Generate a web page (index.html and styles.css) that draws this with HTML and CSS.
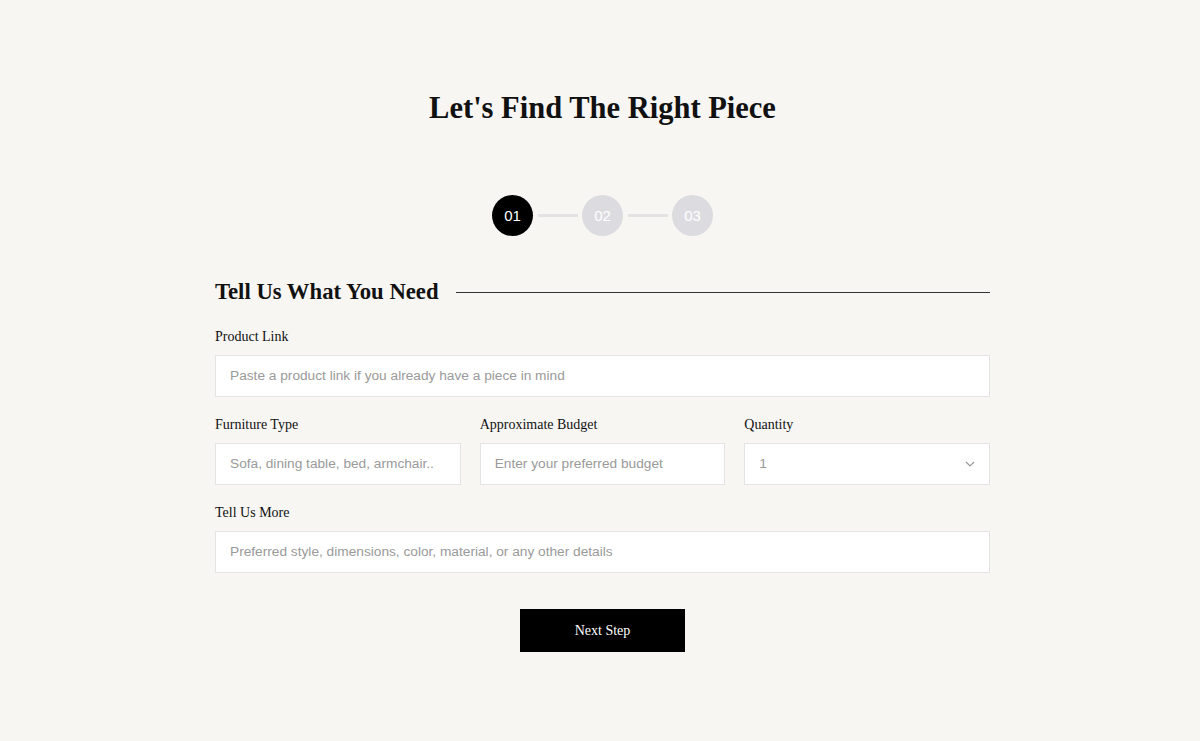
FILE: index.html
```html
<!DOCTYPE html>
<html lang="en">
<head>
  <meta charset="UTF-8" />
  <meta name="viewport" content="width=device-width, initial-scale=1.0"/>
  <title>Find The Right Piece</title>
  <link rel="stylesheet" href="styles.css">
</head>
<body>
  <main class="page">
    <h1 class="title">Let's Find The Right Piece</h1>

    <!-- Steps -->
    <div class="steps">
      <div class="step active">01</div>
      <div class="step-line"></div>
      <div class="step">02</div>
      <div class="step-line"></div>
      <div class="step">03</div>
    </div>

    <form class="form">
      <div class="section-head">
        <h2>Tell Us What You Need</h2>
        <div class="rule"></div>
      </div>

      <div class="field">
        <label>Product Link</label>
        <input type="text" placeholder="Paste a product link if you already have a piece in mind">
      </div>

      <div class="row">
        <div class="field">
          <label>Furniture Type</label>
          <input type="text" placeholder="Sofa, dining table, bed, armchair..">
        </div>
        <div class="field">
          <label>Approximate Budget</label>
          <input type="text" placeholder="Enter your preferred budget">
        </div>
        <div class="field">
          <label>Quantity</label>
          <div class="select">
            <span>1</span>
            <svg width="10" height="6" viewBox="0 0 10 6"><path d="M1 1l4 4 4-4" fill="none" stroke="#999" stroke-width="1.2"/></svg>
          </div>
        </div>
      </div>

      <div class="field">
        <label>Tell Us More</label>
        <input type="text" placeholder="Preferred style, dimensions, color, material, or any other details">
      </div>

      <div class="actions">
        <button type="button" class="btn">Next Step</button>
      </div>
    </form>
  </main>
</body>
</html>
```

FILE: styles.css
```css
body {
  margin: 0;
  background: #f7f6f3;
  font-family: 'Liberation Serif', serif;
  color: #111;
}

.page {
  display: flex;
  flex-direction: column;
  align-items: center;
  padding: 88px 0 0 5px;
}

.title {
  margin: 0;
  font-size: 30.5px;
  font-weight: bold;
  line-height: 40px;
}

.steps {
  display: flex;
  align-items: center;
  margin-top: 67px;
}

.step {
  width: 41px;
  height: 41px;
  border-radius: 50%;
  background: #dcdce0;
  color: #fff;
  font-family: 'Liberation Sans', sans-serif;
  font-size: 15px;
  display: flex;
  align-items: center;
  justify-content: center;
}

.step.active { background: #000; }

.step-line {
  width: 40px;
  height: 3px;
  margin: 0 4.5px;
  background: #e3e3e3;
}

.form {
  width: 775px;
  margin-top: 40px;
}

.section-head {
  display: flex;
  align-items: center;
  gap: 17px;
  margin-bottom: 21px;
}

.section-head h2 {
  margin: 0;
  font-size: 22.7px;
  line-height: 32px;
  font-weight: bold;
}

.rule {
  flex: 1;
  height: 1px;
  background: #333;
}

.field {
  display: flex;
  flex-direction: column;
  margin-bottom: 20px;
}

.field label {
  font-size: 14px;
  line-height: 16px;
  margin-bottom: 10px;
}

.field input, .select {
  box-sizing: border-box;
  height: 42px;
  border: 1px solid #e4e4e4;
  background: #fff;
  padding: 0 14px 1px;
  font-family: 'Liberation Sans', sans-serif;
  font-size: 13.7px;
  color: #9a9a9a;
  outline: none;
}

.field input::placeholder { color: #9a9a9a; }

.select {
  display: flex;
  align-items: center;
  justify-content: space-between;
}

.row {
  display: grid;
  grid-template-columns: repeat(3, 1fr);
  gap: 19px;
}

.actions {
  display: flex;
  justify-content: center;
  margin-top: 36px;
}

.btn {
  width: 165px;
  height: 43px;
  border: none;
  background: #000;
  color: #fff;
  font-family: 'Liberation Serif', serif;
  font-size: 14px;
  cursor: pointer;
}
```
